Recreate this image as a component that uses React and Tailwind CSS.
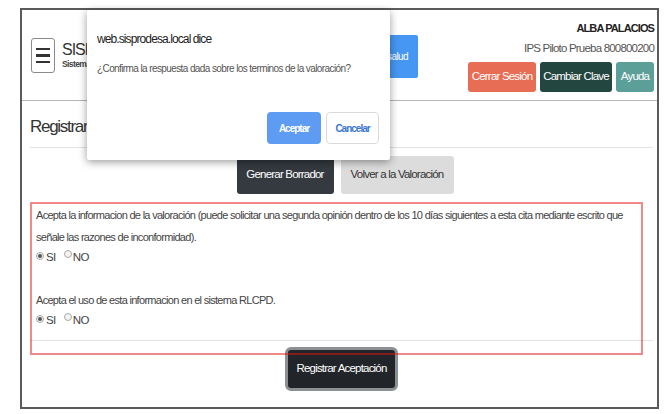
import React from 'react';

const Radio = ({ checked }) => (
  <span className="inline-flex w-[8px] h-[8px] rounded-full border border-[#a9a9a9] bg-[#f3f3f3] items-center justify-center">
    {checked && <span className="w-[4px] h-[4px] rounded-full bg-[#555]" />}
  </span>
);

const Choice = () => (
  <div className="flex items-start h-[14px] text-[11.5px] leading-none text-[#444] tracking-[-0.6px]">
    <span className="mt-[1px]"><Radio checked /></span>
    <span className="ml-[2px] mt-[4px]">SI</span>
    <span className="ml-[8px] mt-[1px]"><Radio /></span>
    <span className="ml-[1px] mt-[4px]">NO</span>
  </div>
);

const App = () => {
  return (
    <div className="relative w-[668px] h-[414px] bg-white overflow-hidden font-['Liberation_Sans',Arial,sans-serif] text-[#333]">
      <div className="ml-[20px] mt-[8px] w-[639px] h-[401px] border-2 border-[#5b5b5b] bg-white overflow-hidden">
        {/* header */}
        <div className="flex h-[91px] border-b border-[#b5b5b5]">
          <div className="flex ml-[9px] mt-[28px]">
            <div className="w-[24px] h-[35px] border border-[#8a8a8a] rounded-[3px] flex flex-col items-center justify-center gap-[4px]">
              <span className="w-[14px] h-[2.5px] bg-[#333]" />
              <span className="w-[14px] h-[2.5px] bg-[#333]" />
              <span className="w-[14px] h-[2.5px] bg-[#333]" />
            </div>
            <div className="ml-[7px] mt-[3px] whitespace-nowrap">
              <div className="text-[16px] leading-[18px] tracking-[-1px] text-[#333]">SISPRODESA</div>
              <div className="text-[8.5px] leading-[10px] tracking-[-0.6px] font-bold text-[#444]">Sistema de Valoración</div>
            </div>
          </div>
          <div className="flex-1" />
          <button className="mt-[25px] h-[43px] w-[80px] mr-[50px] bg-[#4597f3] rounded-[2px] text-white text-[10px] tracking-[-0.6px] whitespace-nowrap flex items-center justify-end pr-[10px]">
            Portal salud
          </button>
          <div className="pt-[10px] pr-[3px] flex flex-col items-end whitespace-nowrap">
            <div className="text-[11px] leading-[16px] tracking-[-0.9px] font-bold text-[#222]">ALBA PALACIOS</div>
            <div className="mt-[4px] text-[11.5px] leading-[16px] tracking-[-0.8px] text-[#555]">IPS Piloto Prueba 800800200</div>
            <div className="mt-[6px] flex gap-[4px] text-[11.5px] tracking-[-0.8px]">
              <button className="w-[68px] h-[30px] rounded-[3px] bg-[#e86d55] text-white">Cerrar Sesión</button>
              <button className="w-[72px] h-[30px] rounded-[3px] bg-[#244640] text-white">Cambiar Clave</button>
              <button className="w-[38px] h-[30px] rounded-[3px] bg-[#5c9f99] text-white">Ayuda</button>
            </div>
          </div>
        </div>

        {/* body */}
        <div className="pl-[8px] pr-[4px]">
          <div className="h-[46px] pt-[6px] flex items-center text-[17px] tracking-[-1.3px] text-[#333] whitespace-nowrap">Registrar Aceptación</div>
          <div className="border-t border-[#e2e2e2]" />
          <div className="mt-[8px] pl-[7px] flex justify-center gap-[7px] text-[11.5px] tracking-[-0.8px] whitespace-nowrap">
            <button className="w-[97px] h-[38px] rounded-[3px] bg-[#343a40] text-white">Generar Borrador</button>
            <button className="w-[113px] h-[38px] rounded-[3px] bg-[#dcdcdc] text-[#333]">Volver a la Valoración</button>
          </div>

          <div className="mt-[10px] pl-[6px] text-[11px] leading-[22px] tracking-[-0.7px] text-[#444]">
            <p>
              <span className="whitespace-nowrap">Acepta la informacion de la valoración (puede solicitar una segunda opinión dentro de los 10 días siguientes a esta cita mediante escrito que</span>
              <br />
              señale las razones de inconformidad).
            </p>
            <Choice />
            <p className="mt-[27px]">Acepta el uso de esta informacion en el sistema RLCPD.</p>
            <Choice />
          </div>

          <div className="mt-[15px] border-t border-[#e2e2e2]" />
          <div className="mt-[6px] flex justify-center">
            <button className="w-[113px] h-[44px] rounded-[6px] border-[3px] border-[#8c8f93] bg-[#212529] text-white text-[11.5px] tracking-[-0.8px] whitespace-nowrap">
              Registrar Aceptación
            </button>
          </div>
        </div>
      </div>

      {/* annotation rectangle */}
      <div className="absolute left-[30px] top-[202px] w-[613px] h-[153px] border-2 border-[rgba(230,20,20,0.5)] pointer-events-none" />

      {/* browser confirm dialog */}
      <div className="absolute left-[87px] top-[10px] w-[303px] h-[150px] bg-white shadow-[0_2px_8px_rgba(0,0,0,0.4)] rounded-[2px] whitespace-nowrap">
        <div className="ml-[10px] mt-[21px] text-[12px] leading-[16px] tracking-[-0.9px] text-[#222]">web.sisprodesa.local dice</div>
        <div className="ml-[10px] mt-[15px] text-[10px] leading-[14px] tracking-[-0.6px] text-[#555]">¿Confirma la respuesta dada sobre los terminos de la valoración?</div>
        <div className="absolute right-[11px] top-[102px] flex gap-[5px] text-[10px] font-bold tracking-[-1px]">
          <button className="w-[54px] h-[32px] rounded-[4px] bg-[#5d9cf2] text-white">Aceptar</button>
          <button className="w-[53px] h-[32px] rounded-[4px] border border-[#dadada] bg-white text-[#3a76d6]">Cancelar</button>
        </div>
      </div>
    </div>
  );
};

export default App;
